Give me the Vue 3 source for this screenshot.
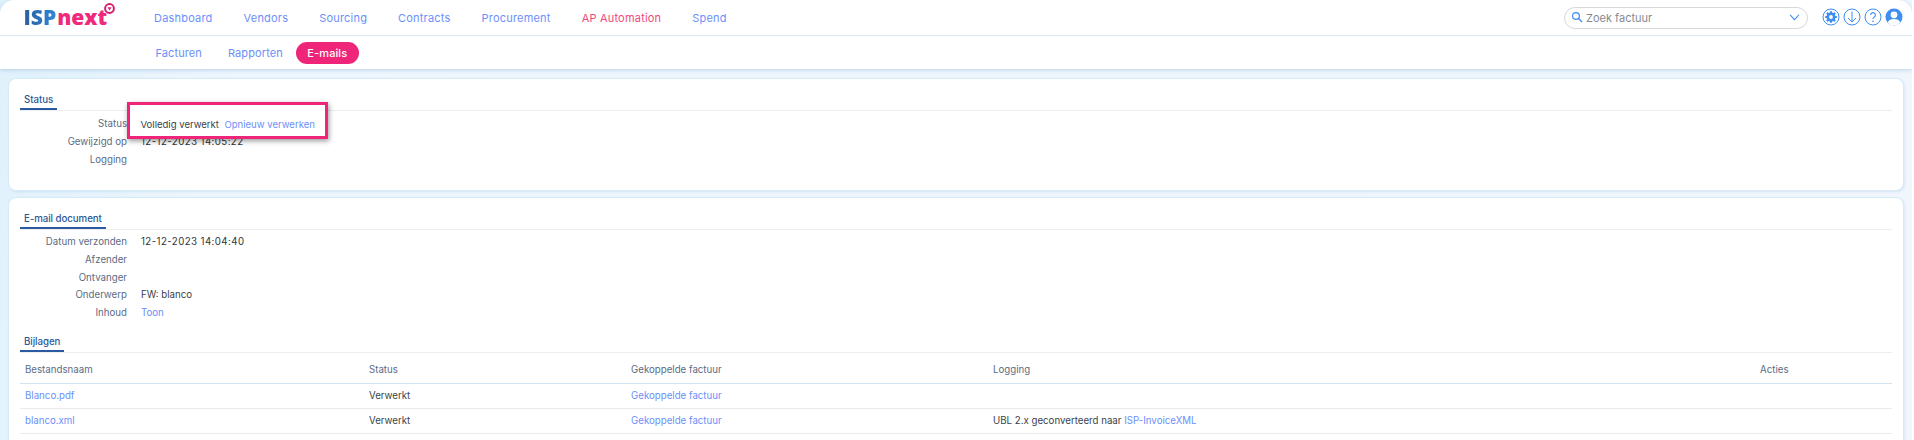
<script setup>
const mainNav = [
  { label: 'Dashboard' }, { label: 'Vendors' }, { label: 'Sourcing' }, { label: 'Contracts' },
  { label: 'Procurement' }, { label: 'AP Automation', active: true }, { label: 'Spend' }
]
const subNav = [{ label: 'Facturen' }, { label: 'Rapporten' }, { label: 'E-mails', active: true }]
const statusRows = [
  { label: 'Status', value: 'Volledig verwerkt' },
  { label: 'Gewijzigd op', value: '12-12-2023 14:05:22', date: true },
  { label: 'Logging', value: '' }
]
const mailRows = [
  { label: 'Datum verzonden', value: '12-12-2023 14:04:40', date: true },
  { label: 'Afzender', value: '' },
  { label: 'Ontvanger', value: '' },
  { label: 'Onderwerp', value: 'FW: blanco' },
  { label: 'Inhoud', link: 'Toon' }
]
</script>

<template>
  <div class="page">
    <header class="head">
      <div class="topbar">
        <div class="logo">
          <span class="isp">ISP</span><span class="next">next</span>
          <svg class="logo-mark" viewBox="0 0 12 12" width="11" height="11">
            <circle cx="6" cy="6" r="4.8" fill="none" stroke="#d81f6f" stroke-width="2.2" />
            <path d="M3.8 4.6h4.4L6 8.2z" fill="#d81f6f" />
          </svg>
        </div>
        <nav class="mainnav">
          <a v-for="n in mainNav" :key="n.label" :class="{ on: n.active }">{{ n.label }}</a>
        </nav>
        <div class="tools">
          <div class="search">
            <svg viewBox="0 0 12 12" width="12" height="12" class="mag">
              <circle cx="5" cy="5" r="3.4" fill="none" stroke="#3f8ef0" stroke-width="1.2" />
              <path d="M7.6 7.6L11 11" stroke="#3f8ef0" stroke-width="1.4" />
            </svg>
            <span class="ph">Zoek factuur</span>
            <svg viewBox="0 0 12 8" width="11" height="7" class="chev">
              <path d="M1 1l5 5.5L11 1" fill="none" stroke="#3f8ef0" stroke-width="1.2" />
            </svg>
          </div>
          <div class="icons">
            <svg viewBox="0 0 18 18" width="18" height="18">
              <circle cx="9" cy="9" r="8" fill="none" stroke="#3f8ef0" stroke-width="1" />
              <circle cx="9" cy="9" r="3.2" fill="none" stroke="#3f8ef0" stroke-width="2.6" />
              <path d="M9 3.2v2.500M9 12.300v2.500M3.200 9h2.500M12.300 9h2.500M4.900 4.900l1.800 1.800M11.300 11.300l1.800 1.800M13.100 4.900l-1.800 1.800M6.700 11.300l-1.800 1.800" stroke="#3f8ef0" stroke-width="2.2" />
            </svg>
            <svg viewBox="0 0 18 18" width="18" height="18">
              <circle cx="9" cy="9" r="8" fill="none" stroke="#3f8ef0" stroke-width="1" />
              <path d="M9 3.5v10.500M5 10l4 4 4-4" fill="none" stroke="#3f8ef0" stroke-width="1" />
            </svg>
            <svg viewBox="0 0 18 18" width="18" height="18">
              <circle cx="9" cy="9" r="8" fill="none" stroke="#3f8ef0" stroke-width="1" />
              <path d="M6.600 7a2.400 2.400 0 1 1 3.600 2.100c-.8.500-1.200 1-1.200 2" fill="none" stroke="#3f8ef0" stroke-width="1.1" />
              <circle cx="9" cy="13.2" r=".8" fill="#3f8ef0" />
            </svg>
            <svg viewBox="0 0 18 18" width="18" height="18">
              <circle cx="9" cy="9" r="8.5" fill="#3f8ef0" />
              <circle cx="9" cy="6.8" r="3.4" fill="#fff" />
              <path d="M2.800 14.500c1-2.800 3.200-3.600 6.200-3.600s5.200.8 6.200 3.600a8 8 0 0 1-12.400 0z" fill="#fff" />
            </svg>
          </div>
        </div>
      </div>
      <div class="subbar">
        <a v-for="n in subNav" :key="n.label" :class="{ pill: n.active }">{{ n.label }}</a>
      </div>
    </header>

    <main class="content">
      <section class="card card-status">
        <div class="tabline"><span class="tab">Status</span></div>
        <dl class="rows">
          <div v-for="r in statusRows" :key="r.label" class="row">
            <dt>{{ r.label }}</dt>
            <dd :class="{ date: r.date }">{{ r.value }}</dd>
          </div>
        </dl>
        <div class="callout">
          <span>Volledig verwerkt</span>
          <a>Opnieuw verwerken</a>
        </div>
      </section>

      <section class="card card-mail">
        <div class="tabline"><span class="tab">E-mail document</span></div>
        <dl class="rows">
          <div v-for="r in mailRows" :key="r.label" class="row">
            <dt>{{ r.label }}</dt>
            <dd :class="{ date: r.date }">{{ r.value }}<a v-if="r.link">{{ r.link }}</a></dd>
          </div>
        </dl>
        <div class="tabline second"><span class="tab">Bijlagen</span></div>
        <div class="table">
          <div class="tr th">
            <span>Bestandsnaam</span><span>Status</span><span>Gekoppelde factuur</span><span>Logging</span><span>Acties</span>
          </div>
          <div class="tr">
            <a>Blanco.pdf</a><span>Verwerkt</span><a>Gekoppelde factuur</a><span></span><span></span>
          </div>
          <div class="tr">
            <a>blanco.xml</a><span>Verwerkt</span><a>Gekoppelde factuur</a>
            <span>UBL 2.x geconverteerd naar <a>ISP-InvoiceXML</a></span><span></span>
          </div>
        </div>
      </section>
    </main>
  </div>
</template>

<style>
html, body { margin: 0; background: #fff; overflow: hidden; }
</style>

<style scoped>
.page {
  width: 1912px;
  height: 440px;
  overflow: hidden;
  font-family: Inter, "Liberation Sans", sans-serif;
  font-size: 9.7px;
  color: #3a3f4a;
  background: linear-gradient(100deg, #dff1fc 0, #eef6fd 12%, #f1f6fd 100%);
}
a { color: #6c8ffb; text-decoration: none; }
.head {
  background: #fff;
  border-radius: 14px 14px 0 0;
  box-shadow: 0 1px 4px rgba(150, 185, 220, .6);
}
.topbar {
  height: 36px;
  box-sizing: border-box;
  display: flex;
  align-items: center;
  border-bottom: 1px solid #d9e9f5;
  position: relative;
}
.logo {
  width: 154px;
  flex: none;
  box-sizing: border-box;
  padding-left: 23.5px;
  font-family: "Open Sans", sans-serif;
  font-weight: 800;
  font-size: 21px;
  line-height: 35px;
  height: 35px;
  position: relative;
}
.isp {
  background: linear-gradient(90deg, #2a5f9e, #2f86d8);
  -webkit-background-clip: text;
  background-clip: text;
  color: transparent;
}
.next { color: #ee2a7b; margin-left: 1px; }
.logo-mark { position: absolute; left: 104px; top: 3px; }
.mainnav { display: flex; gap: 31px; font-size: 11px; letter-spacing: .2px; }
.mainnav a.on { color: #ee4a7c; }
.tools { margin-left: auto; display: flex; align-items: center; padding-right: 9px; }
.search {
  width: 244px;
  height: 22px;
  box-sizing: border-box;
  border: 1px solid #d5d8dc;
  border-radius: 11px;
  display: flex;
  align-items: center;
  padding: 0 7px 0 6px;
  margin-right: 14px;
  color: #858a90;
  font-size: 11px;
}
.mag { margin-right: 3px; margin-top: -2px; }
.ph { flex: 1; }
.chev { margin-top: -1px; }
.icons { display: flex; gap: 3px; margin-top: -1px; }
.subbar {
  height: 33px;
  display: flex;
  align-items: center;
  padding-left: 155.5px;
  gap: 26px;
  font-size: 11px;
  letter-spacing: .1px;
}
.subbar a.pill {
  background: #ee2579;
  color: #fff;
  font-weight: 500;
  border-radius: 11px;
  height: 22px;
  line-height: 22px;
  padding: 0 11.5px;
  margin-left: -13px;
}
.content { padding: 10px 9px 0 9px; display: flex; flex-direction: column; gap: 8px; }
.card {
  background: #fff;
  border-radius: 7px;
  box-shadow: 0 0 0 1px #d6ebf8, 1px 1px 3px rgba(150, 185, 220, .5);
  padding: 13px 11px 0 11px;
  position: relative;
}
.card-status { height: 111px; box-sizing: border-box; }
.card-mail { height: 260px; box-sizing: border-box; }
.tabline { border-bottom: 1px solid #eceef0; height: 18px; }
.tabline.second { margin-top: 12.5px; }
.tab {
  display: inline-block;
  height: 16px;
  padding: 0 4px;
  color: #2c5896;
  font-weight: 500;
  letter-spacing: -.05px;
  border-bottom: 2px solid #2b5aa0;
  line-height: 16px;
}
.rows { margin: 3px 0 0; }
.card-status .rows { margin-top: 4px; }
.row { display: flex; height: 17.75px; line-height: 17.75px; }
.row dt { width: 107px; text-align: right; color: #5c6b84; margin: 0; }
.row dd { margin: 0 0 0 14px; }
.row dd.date { letter-spacing: .42px; color: #2f333a; }
.callout {
  position: absolute;
  left: 118px;
  top: 23px;
  width: 201px;
  height: 37px;
  box-sizing: border-box;
  background: #fff;
  border: 3px solid #ee2579;
  box-shadow: 1px 2px 5px rgba(0, 0, 0, .4);
  display: flex;
  align-items: center;
  gap: 5.5px;
  padding: 7px 0 0 10.5px;
  white-space: nowrap;
  font-size: 9.55px;
}
.tr {
  display: grid;
  grid-template-columns: 344px 262px 362px 767px 1fr;
  height: 25px;
  line-height: 24px;
  padding-left: 5px;
  box-sizing: border-box;
  border-bottom: 1px solid #e8ebee;
}
.tr.th { color: #5c6b84; border-bottom-color: #d2e4f3; height: 31px; padding-top: 5px; }
</style>
